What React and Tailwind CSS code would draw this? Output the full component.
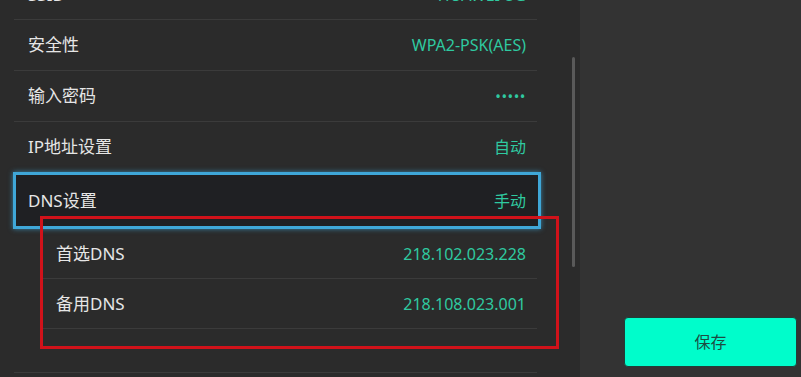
import React from 'react';

const FONT = "font-['Noto_Sans','Noto_Sans_CJK_SC',sans-serif]";

const rows = [
  { label: 'SSID', value: 'HUAWEI-5G' },
  { label: '安全性', value: 'WPA2-PSK(AES)' },
  { label: '输入密码', value: '•••••', dots: true },
  { label: 'IP地址设置', value: '自动' },
];

const dnsRows = [
  { label: '首选DNS', value: '218.102.023.228' },
  { label: '备用DNS', value: '218.108.023.001' },
];

const Row = ({ label, value, dots, first }) => (
  <div
    className={`h-[51px] border-b border-[#3b3b3b] pl-[14px] pr-[11px] flex items-center justify-between ${first ? 'pt-[2px]' : ''}`}
  >
    <span className="text-[17px] text-[#e6e6e6]">{label}</span>
    <span className={dots ? 'text-[15px] tracking-[0.5px] text-[#2fc9a0]' : 'text-[16px] text-[#2fc9a0]'}>{value}</span>
  </div>
);

export default function App() {
  return (
    <div className={`flex w-[801px] h-[377px] overflow-hidden bg-[#2b2b2b] ${FONT}`}>
      <div className="relative w-[580px] shrink-0 bg-[#2b2b2b]">
        <div className="ml-[14px] w-[523px] -mt-[31px]">
          {rows.map((r, i) => (
            <Row key={r.label} {...r} first={i === 0} />
          ))}

          <div className="-ml-[1px] -mt-[1px] w-[528px] h-[57px] border-[3px] border-[#3fa7d8] bg-[#1f2023] shadow-[0_0_5px_rgba(63,167,216,0.7)] pl-[12px] pr-[12px] flex items-center justify-between">
            <span className="text-[17px] text-[#e6e6e6]">DNS设置</span>
            <span className="text-[16px] text-[#2fc9a0]">手动</span>
          </div>

          <div className="border-b border-[#3b3b3b]">
            <div className="ml-[28px]">
              {dnsRows.map((r) => (
                <div
                  key={r.label}
                  className="h-[50px] border-b border-[#3b3b3b] pl-[14px] pr-[11px] flex items-center justify-between"
                >
                  <span className="text-[17px] text-[#e6e6e6]">{r.label}</span>
                  <span className="text-[16px] text-[#2fc9a0]">{r.value}</span>
                </div>
              ))}
              <div className="h-[43px]" />
            </div>
          </div>
        </div>

        {/* scrollbar */}
        <div className="absolute left-[572px] top-[57px] w-[3px] h-[210px] rounded-full bg-[#595959]" />

        {/* annotation box */}
        <div className="absolute left-[40px] top-[216px] w-[519px] h-[133px] border-[3px] border-[#d0121a]" />
      </div>

      <div className="flex-1 bg-[#333333] flex flex-col justify-end items-end pr-[4px] pb-[10px]">
        <button className="w-[173px] h-[50px] rounded-[4px] bg-[#00fdcb] border border-[#1f3f38] text-[16px] text-[#1d4b41]">
          保存
        </button>
      </div>
    </div>
  );
}
